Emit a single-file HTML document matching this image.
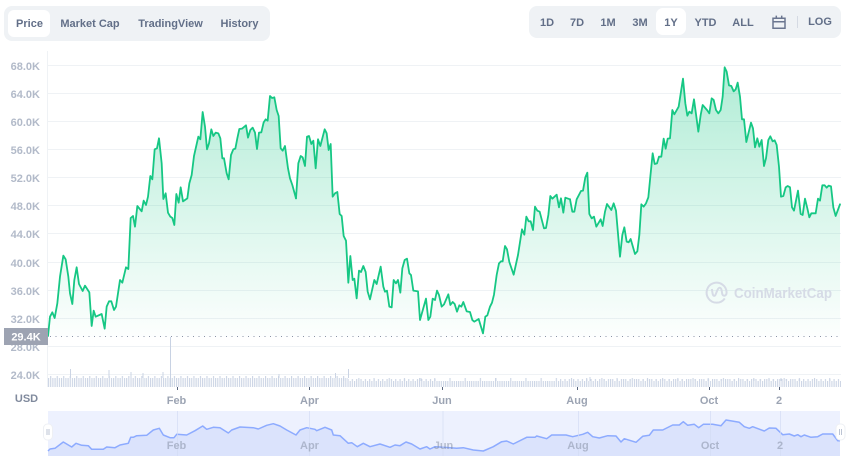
<!DOCTYPE html>
<html><head><meta charset="utf-8"><style>
html,body{margin:0;padding:0;background:#fff;width:846px;height:465px;overflow:hidden}
svg{display:block}
text{font-family:"Liberation Sans",sans-serif}
.t{font-size:11px;font-weight:bold;fill:#626f88;text-anchor:middle}
.y{font-size:11px;font-weight:bold;fill:#b2bac9;text-anchor:end}
.x{font-size:11px;fill:#808a9d;text-anchor:middle;font-weight:bold;fill-opacity:.78}
.n{font-size:11px;fill:#808a9d;text-anchor:middle;font-weight:bold;fill-opacity:.5}
</style></head><body>
<svg width="846" height="465" viewBox="0 0 846 465" xmlns="http://www.w3.org/2000/svg">
<defs>
<linearGradient id="g1" gradientUnits="userSpaceOnUse" x1="0" y1="-78" x2="0" y2="741"><stop offset="0" stop-color="#16c784" stop-opacity=".34"/><stop offset="1" stop-color="#16c784" stop-opacity=".01"/></linearGradient>
<linearGradient id="g2" gradientUnits="userSpaceOnUse" x1="0" y1="-168" x2="0" y2="651"><stop offset="0" stop-color="#16c784" stop-opacity=".34"/><stop offset="1" stop-color="#16c784" stop-opacity=".01"/></linearGradient>
<linearGradient id="g3" gradientUnits="userSpaceOnUse" x1="0" y1="12" x2="0" y2="831"><stop offset="0" stop-color="#16c784" stop-opacity=".34"/><stop offset="1" stop-color="#16c784" stop-opacity=".01"/></linearGradient>
<pattern id="p1" patternUnits="userSpaceOnUse" x="48" y="0" width="2.17" height="10"><rect width="1.1" height="10" fill="#cbd4e4"/></pattern>
<pattern id="p2" patternUnits="userSpaceOnUse" x="48" y="0" width="4.34" height="10"><rect width="1.1" height="10" fill="#cbd4e4"/></pattern>
<pattern id="p3" patternUnits="userSpaceOnUse" x="50.17" y="0" width="6.51" height="10"><rect width="1.1" height="10" fill="#cbd4e4"/></pattern>
<pattern id="p4" patternUnits="userSpaceOnUse" x="54.51" y="0" width="15.19" height="10"><rect width="1.1" height="10" fill="#cbd4e4"/></pattern>
</defs>

<!-- top tabs -->
<rect x="4" y="6" width="266" height="35" rx="8" fill="#eff2f5"/>
<rect x="8" y="10" width="42" height="27" rx="6" fill="#fff"/>
<text class="t" x="29.5" y="27">Price</text>
<text class="t" x="90" y="27">Market Cap</text>
<text class="t" x="170.5" y="27">TradingView</text>
<text class="t" x="239.5" y="27">History</text>

<!-- range -->
<rect x="529" y="6" width="312" height="32" rx="8" fill="#eff2f5"/>
<rect x="656" y="8" width="30" height="27" rx="7" fill="#fff"/>
<text class="t" x="547" y="26">1D</text>
<text class="t" x="577" y="26">7D</text>
<text class="t" x="608" y="26">1M</text>
<text class="t" x="640" y="26">3M</text>
<text class="t" x="671" y="26">1Y</text>
<text class="t" x="705.5" y="26">YTD</text>
<text class="t" x="743" y="26">ALL</text>
<path d="M773 18.2h12v10h-12zM773 21.8h12M776.3 15.6v3M781.7 15.6v3" fill="none" stroke="#6b7690" stroke-width="1.5"/>
<path d="M797.5 16v12" stroke="#d5dae3" stroke-width="1"/>
<text class="t" x="820" y="25">LOG</text>

<!-- grid -->
<g stroke="#eff2f5" stroke-width="1">
<path d="M47.5 51V387"/>
<path d="M48 65.5H841M48 93.5H841M48 121.5H841M48 149.5H841M48 177.5H841M48 205.5H841M48 233.5H841M48 262.5H841M48 290.5H841M48 318.5H841M48 346.5H841M48 374.5H841"/>
</g>

<!-- y labels -->
<text class="y" x="40" y="70">68.0K</text>
<text class="y" x="40" y="98">64.0K</text>
<text class="y" x="40" y="126">60.0K</text>
<text class="y" x="40" y="154">56.0K</text>
<text class="y" x="40" y="182">52.0K</text>
<text class="y" x="40" y="210">48.0K</text>
<text class="y" x="40" y="238">44.0K</text>
<text class="y" x="40" y="267">40.0K</text>
<text class="y" x="40" y="295">36.0K</text>
<text class="y" x="40" y="323">32.0K</text>
<text class="y" x="40" y="351">28.0K</text>
<text class="y" x="40" y="379">24.0K</text>

<!-- area -->
<polygon fill="url(#g1)" transform="translate(40,90) scale(.33333)" points="24,741 24,738 30,680 37,667 44,684 52,640 60,560 70,497 77,508 85,560 90,610 97,642 103,570 110,532 117,582 128,603 135,587 148,607 155,708 161,662 167,680 185,672 194,716 200,650 207,634 214,634 222,660 228,650 240,570 247,578 258,532 265,537 272,384 279,378 285,410 292,348 305,364 311,332 318,345 324,320 331,258 337,268 344,178 351,175 357,145 365,220 370,327 377,310 384,368 391,380 397,384 403,405 409,312 416,338 422,292 429,334 442,325 448,280 455,255 462,198 475,140 481,148 488,66 495,110 501,178 507,160 514,118 520,138 527,128 535,130 541,145 547,205 552,205 560,250 566,268 573,195 580,178 586,176 592,145 598,117 606,116 618,106 624,143 631,120 638,113 645,128 651,177 657,128 664,127 671,97 677,88 683,92 690,18 696,24 703,22 710,60 716,78 722,175 728,182 735,168 744,235 750,265 757,285 768,325 768,741"/>
<polygon fill="url(#g2)" transform="translate(290,120) scale(.33333)" points="18,651 18,235 25,130 32,108 38,112 45,138 51,50 57,48 64,72 70,62 77,145 84,58 91,78 104,28 110,40 116,90 122,72 128,230 135,220 142,216 149,282 155,288 161,348 168,362 175,488 181,408 188,480 193,476 200,535 207,452 213,456 220,438 227,456 233,515 240,538 253,480 260,492 272,440 280,500 285,515 291,512 298,560 305,562 311,480 318,490 324,480 331,518 337,445 344,420 351,416 358,460 363,465 370,512 384,514 390,600 408,536 415,600 421,590 428,536 435,540 441,512 447,525 455,560 462,553 475,523 481,555 488,546 494,552 501,575 508,556 514,560 520,546 530,574 540,576 547,600 553,605 566,597 579,640 586,590 592,586 600,560 606,548 612,524 620,465 627,430 633,424 638,424 645,378 651,388 658,426 671,464 684,405 696,328 703,344 709,290 716,304 722,304 729,330 735,260 742,272 749,275 762,325 768,324 775,285 781,228 787,236 800,224 807,262 813,235 820,278 826,233 840,238 840,651"/>
<polygon fill="url(#g3)" transform="translate(570,60) scale(.33333)" points="0,831 0,418 7,455 13,455 20,418 33,393 39,392 46,352 52,338 58,462 65,475 72,470 79,500 92,478 98,498 105,455 111,432 124,450 131,430 138,452 150,590 157,525 163,502 170,545 176,547 182,537 195,582 202,574 208,525 214,433 221,440 228,430 235,412 241,350 248,280 254,312 261,310 267,290 274,290 281,236 287,266 293,236 300,235 307,150 313,163 326,140 339,56 346,130 352,167 358,155 365,160 372,118 379,170 385,215 392,165 398,135 411,150 418,160 425,115 431,120 438,150 445,160 452,150 458,110 464,22 470,35 477,76 484,78 491,94 497,88 503,68 510,110 516,178 522,178 529,246 543,188 549,205 555,262 562,235 568,260 575,240 582,318 588,295 595,240 601,229 608,244 614,241 620,255 627,320 633,410 640,408 647,382 653,378 660,382 666,442 672,452 684,392 692,462 698,465 705,416 712,445 718,472 724,460 737,460 744,416 750,422 757,376 764,376 770,383 776,377 783,379 790,442 797,468 810,433 810,831"/>

<!-- watermark -->
<path d="M724.8 298.4A10 10 0 1 1 726.6 292.6c0 2.200-1.500 3.500-3 3-1.600-.5-1.500-2.400-1.800-4.600-.3-2.100-1.200-3.600-2.500-3.200-1.500.4-2.200 3-3 5-.7 1.900-1.300 3.300-2.400 3-1.400-.4-1.500-3.500-2-6.800" fill="none" stroke="#d6dbe6" stroke-width="2"/>
<text x="734" y="298" font-size="14.500" font-weight="bold" fill="#d6dbe6" textLength="98" lengthAdjust="spacingAndGlyphs">CoinMarketCap</text>

<!-- line -->
<g fill="none" stroke="#16c784" stroke-width="5.400" stroke-linejoin="round" stroke-linecap="round">
<polyline transform="translate(40,90) scale(.33333)" points="24,738 30,680 37,667 44,684 52,640 60,560 70,497 77,508 85,560 90,610 97,642 103,570 110,532 117,582 128,603 135,587 148,607 155,708 161,662 167,680 185,672 194,716 200,650 207,634 214,634 222,660 228,650 240,570 247,578 258,532 265,537 272,384 279,378 285,410 292,348 305,364 311,332 318,345 324,320 331,258 337,268 344,178 351,175 357,145 365,220 370,327 377,310 384,368 391,380 397,384 403,405 409,312 416,338 422,292 429,334 442,325 448,280 455,255 462,198 475,140 481,148 488,66 495,110 501,178 507,160 514,118 520,138 527,128 535,130 541,145 547,205 552,205 560,250 566,268 573,195 580,178 586,176 592,145 598,117 606,116 618,106 624,143 631,120 638,113 645,128 651,177 657,128 664,127 671,97 677,88 683,92 690,18 696,24 703,22 710,60 716,78 722,175 728,182 735,168 744,235 750,265 757,285 768,325"/>
<polyline transform="translate(290,120) scale(.33333)" points="18,235 25,130 32,108 38,112 45,138 51,50 57,48 64,72 70,62 77,145 84,58 91,78 104,28 110,40 116,90 122,72 128,230 135,220 142,216 149,282 155,288 161,348 168,362 175,488 181,408 188,480 193,476 200,535 207,452 213,456 220,438 227,456 233,515 240,538 253,480 260,492 272,440 280,500 285,515 291,512 298,560 305,562 311,480 318,490 324,480 331,518 337,445 344,420 351,416 358,460 363,465 370,512 384,514 390,600 408,536 415,600 421,590 428,536 435,540 441,512 447,525 455,560 462,553 475,523 481,555 488,546 494,552 501,575 508,556 514,560 520,546 530,574 540,576 547,600 553,605 566,597 579,640 586,590 592,586 600,560 606,548 612,524 620,465 627,430 633,424 638,424 645,378 651,388 658,426 671,464 684,405 696,328 703,344 709,290 716,304 722,304 729,330 735,260 742,272 749,275 762,325 768,324 775,285 781,228 787,236 800,224 807,262 813,235 820,278 826,233 840,238"/>
<polyline transform="translate(570,60) scale(.33333)" points="0,418 7,455 13,455 20,418 33,393 39,392 46,352 52,338 58,462 65,475 72,470 79,500 92,478 98,498 105,455 111,432 124,450 131,430 138,452 150,590 157,525 163,502 170,545 176,547 182,537 195,582 202,574 208,525 214,433 221,440 228,430 235,412 241,350 248,280 254,312 261,310 267,290 274,290 281,236 287,266 293,236 300,235 307,150 313,163 326,140 339,56 346,130 352,167 358,155 365,160 372,118 379,170 385,215 392,165 398,135 411,150 418,160 425,115 431,120 438,150 445,160 452,150 458,110 464,22 470,35 477,76 484,78 491,94 497,88 503,68 510,110 516,178 522,178 529,246 543,188 549,205 555,262 562,235 568,260 575,240 582,318 588,295 595,240 601,229 608,244 614,241 620,255 627,320 633,410 640,408 647,382 653,378 660,382 666,442 672,452 684,392 692,462 698,465 705,416 712,445 718,472 724,460 737,460 744,416 750,422 757,376 764,376 770,383 776,377 783,379 790,442 797,468 810,433"/>
</g>

<!-- volume -->
<rect x="48" y="381" width="793" height="6" fill="url(#p1)"/>
<rect x="48" y="378" width="300" height="3" fill="url(#p1)"/>
<rect x="348" y="379" width="90" height="2" fill="url(#p2)"/>
<rect x="48" y="376" width="300" height="2" fill="url(#p3)"/>
<rect x="560" y="379" width="281" height="2" fill="url(#p2)"/>
<rect x="340" y="378" width="500" height="3" fill="url(#p4)"/>
<rect x="600" y="379" width="200" height="2" fill="url(#p3)"/>
<path d="M70.500 369V378M109 370V378M131 372V378M143 373V378M163 372V378M348.500 369V378M335.500 373V378M279 374V378M421 378V381M496 378V381M590 377V381M781 378V381" stroke="#cbd4e4" stroke-width="1"/>
<path d="M170.500 337V387" stroke="#c8d2e3" stroke-width="1"/>

<!-- dotted -->
<path d="M50 336.500H841" stroke="#8b93a6" stroke-width="1" stroke-dasharray="1 4.500"/>

<!-- price tag -->
<rect x="4" y="328" width="44" height="17" fill="#9da3b2"/>
<text x="26" y="340.500" font-size="11" font-weight="bold" fill="#fff" text-anchor="middle">29.4K</text>

<!-- x axis -->
<path d="M177.500 387V390M309.500 387V390M442.500 387V390M577.500 387V390M709.500 387V390M779.500 387V390" stroke="#58667e" stroke-width="1"/>
<text x="26.500" y="402" font-size="11" font-weight="bold" fill="#808a9d" text-anchor="middle">USD</text>
<text class="x" x="176.500" y="404">Feb</text>
<text class="x" x="309.500" y="404">Apr</text>
<text class="x" x="442" y="404">Jun</text>
<text class="x" x="577" y="404">Aug</text>
<text class="x" x="709" y="404">Oct</text>
<text class="x" x="779" y="404">2</text>

<!-- navigator -->
<rect x="48" y="411" width="792" height="45" fill="#edf1fe"/>
<path d="M48 456V451 L50,449 55,448.300 63.300,442 71.700,447 76,443.300 81.700,445.300 88.300,445.700 91.700,449.300 103.300,449.300 106.700,447 115,447.700 120,445 128.300,443.300 130.700,437.300 133.300,437.300 136.700,435.700 146.700,435.300 153.300,430 159.300,428.300 163.300,435 170,437.700 174,437.700 176.700,434.300 186.700,435 195,430.700 202.700,426 206.700,429.300 213.300,427.300 220,427.700 228.300,433 231.700,430 240,427 253.300,427.700 258.300,429 266.700,425.300 273.300,423.700 280,426 286.700,430 296,435 300,430 306.700,427.700 315,429.300 316.700,430.700 325,427.300 331.700,430 333.300,435 340,435.700 348.300,443.300 351.700,442.700 357.300,446.700 363.300,443.300 370,446.700 380,444 390,447.300 395,445 400,445.700 406,442 411.700,444 420,449 426.700,446.700 430,449 435,446.700 443.300,447.300 456.700,448.300 463.300,447.700 473.300,450 483.300,451 493.300,446.700 501.700,441.700 506.700,441 513.300,444 526.700,437.300 535,437.300 536.700,436 546.700,438.700 551.700,435 560,435 566,435 572.700,436.700 582.700,434.300 587.700,432.300 592.700,436.700 599.300,438 607.700,435.700 616,436 621,442 624.300,438.700 636,442.300 642.700,436.300 649.300,435.300 653.300,430 662.700,430 672.700,425 679.300,425 683.300,421.700 687.700,425.300 694.300,424.300 698.700,427.700 703.300,424.300 712.700,424.300 721,425.700 726,420 739.300,422.300 744.300,426.700 749.300,428.300 752.700,426.700 764.300,431 769.300,428 776,428.300 782.700,434.700 789.300,434 794.300,436 797.700,434.700 801,436.700 804.300,435 811,437.300 817.700,436.700 822.700,434 832.700,434 837.700,440.700 840,440.700V456Z" fill="#dbe3fc"/>
<polyline fill="none" stroke="#8dabff" stroke-width="1.500" stroke-linejoin="round" points="48,451 50,449 55,448.300 63.300,442 71.700,447 76,443.300 81.700,445.300 88.300,445.700 91.700,449.300 103.300,449.300 106.700,447 115,447.700 120,445 128.300,443.300 130.700,437.300 133.300,437.300 136.700,435.700 146.700,435.300 153.300,430 159.300,428.300 163.300,435 170,437.700 174,437.700 176.700,434.300 186.700,435 195,430.700 202.700,426 206.700,429.300 213.300,427.300 220,427.700 228.300,433 231.700,430 240,427 253.300,427.700 258.300,429 266.700,425.300 273.300,423.700 280,426 286.700,430 296,435 300,430 306.700,427.700 315,429.300 316.700,430.700 325,427.300 331.700,430 333.300,435 340,435.700 348.300,443.300 351.700,442.700 357.300,446.700 363.300,443.300 370,446.700 380,444 390,447.300 395,445 400,445.700 406,442 411.700,444 420,449 426.700,446.700 430,449 435,446.700 443.300,447.300 456.700,448.300 463.300,447.700 473.300,450 483.300,451 493.300,446.700 501.700,441.700 506.700,441 513.300,444 526.700,437.300 535,437.300 536.700,436 546.700,438.700 551.700,435 560,435 566,435 572.700,436.700 582.700,434.300 587.700,432.300 592.700,436.700 599.300,438 607.700,435.700 616,436 621,442 624.300,438.700 636,442.300 642.700,436.300 649.300,435.300 653.300,430 662.700,430 672.700,425 679.300,425 683.300,421.700 687.700,425.300 694.300,424.300 698.700,427.700 703.300,424.300 712.700,424.300 721,425.700 726,420 739.300,422.300 744.300,426.700 749.300,428.300 752.700,426.700 764.300,431 769.300,428 776,428.300 782.700,434.700 789.300,434 794.300,436 797.700,434.700 801,436.700 804.300,435 811,437.300 817.700,436.700 822.700,434 832.700,434 837.700,440.700 840,440.700"/>
<path d="M177.500 411V456M309.500 411V456M443 411V456M578.500 411V456M710.500 411V456M780.500 411V456" stroke="#d3dcf3" stroke-width="1" stroke-opacity=".7"/>
<text class="n" x="176.500" y="449">Feb</text>
<text class="n" x="309.500" y="449">Apr</text>
<text class="n" x="443.500" y="449">Jun</text>
<text class="n" x="578" y="449">Aug</text>
<text class="n" x="710" y="449">Oct</text>
<text class="n" x="780" y="449">2</text>

<!-- handles -->
<rect x="43.500" y="424" width="9" height="16" rx="4" fill="#fff" stroke="#eef0f4" stroke-width="1"/>
<path d="M47 429v6M49 429v6" stroke="#bcc4d4" stroke-width="1"/>
<rect x="836" y="424" width="9" height="16" rx="4" fill="#fff" stroke="#eef0f4" stroke-width="1"/>
<path d="M839.500 429v6M841.500 429v6" stroke="#bcc4d4" stroke-width="1"/>
</svg>
</body></html>
